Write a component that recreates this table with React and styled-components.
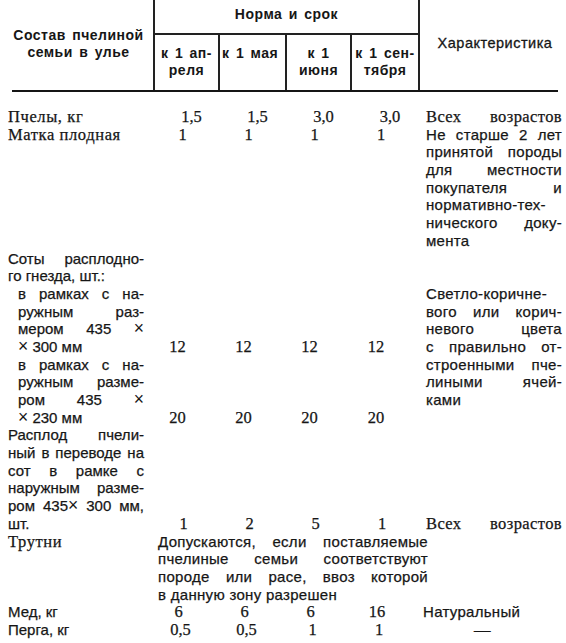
import React from "react";
import styled, { createGlobalStyle } from "styled-components";

const GlobalStyle = createGlobalStyle`
  html, body {
    margin: 0;
    padding: 0;
    background: #ffffff;
  }
  body {
    color: #161616;
    font-family: "Liberation Serif", "Times New Roman", serif;
  }
`;

const SERIF = `"Liberation Serif", "Times New Roman", serif`;
const SANS = `"Liberation Sans", Arial, sans-serif`;
const COLS = "155px 65px 67px 65px 68px 1fr";
const LINE = "17.7px";

const Page = styled.div`
  width: 566px;
  height: 643px;
  overflow: hidden;
`;

const Head = styled.div`
  display: grid;
  grid-template-columns: ${COLS};
  grid-template-rows: 35px 55px;
  font-family: ${SANS};
  font-weight: 700;
  font-size: 14px;
  letter-spacing: 0.5px;
  word-spacing: 2px;
  line-height: 17px;
`;

const HeadTitle = styled.div`
  grid-row: 1 / span 2;
  grid-column: 1;
  border-right: 2px solid #222;
  display: flex;
  align-items: center;
  justify-content: center;
  text-align: center;
  padding: 0 0 2px 4px;
`;

const HeadGroup = styled.div`
  grid-row: 1;
  grid-column: 2 / span 4;
  border-right: 2px solid #222;
  border-bottom: 2px solid #222;
  display: flex;
  align-items: center;
  justify-content: center;
  padding-bottom: 4px;
`;

const HeadSub = styled.div`
  grid-row: 2;
  border-right: 2px solid #222;
  padding: 10px 0 0 ${({ $left }) => ($left ? "2px" : "0")};
  text-align: ${({ $left }) => ($left ? "left" : "center")};
  white-space: nowrap;
`;

const HeadNote = styled.div`
  grid-row: 1 / span 2;
  grid-column: 6;
  display: flex;
  align-items: center;
  justify-content: center;
  font-weight: 400;
  font-size: 14.5px;
  -webkit-text-stroke: 0.3px #161616;
  padding: 0 0 4px 4px;
`;

const Rule = styled.div`
  height: 2px;
  margin: 0 8px 0 12px;
  background: #151515;
`;

const Body = styled.div`
  display: grid;
  grid-template-columns: ${COLS};
  padding-top: 16px;
  line-height: ${LINE};
  -webkit-text-stroke: 0.25px #161616;
`;

const Label = styled.div`
  grid-column: 1;
  grid-row: ${({ $row }) => $row};
  padding: 0 11px 0 ${({ $indent }) => ($indent ? "18px" : "8px")};
  font-family: ${({ $sans }) => ($sans ? SANS : SERIF)};
  font-size: ${({ $sans }) => ($sans ? "15px" : "16.5px")};
  letter-spacing: ${({ $sans }) => ($sans ? "0" : "0.6px")};
`;

const Num = styled.div`
  grid-row: ${({ $row }) => $row};
  align-self: ${({ $bottom }) => ($bottom ? "end" : "start")};
  text-align: center;
  font-family: ${SERIF};
  font-size: 16.5px;
  transform: translateX(${({ $shift }) => $shift}px);
`;

const Note = styled.div`
  grid-column: 6;
  grid-row: ${({ $row }) => $row} / span ${({ $span }) => $span || 1};
  align-self: ${({ $bottom }) => ($bottom ? "end" : "start")};
  padding: 0 4px 0 ${({ $pad }) => $pad || 6}px;
  font-family: ${({ $sans }) => ($sans ? SANS : SERIF)};
  font-size: ${({ $sans }) => ($sans ? "15px" : "16.5px")};
  letter-spacing: ${({ $sans }) => ($sans ? "0.3px" : "0.4px")};
`;

const Wide = styled.div`
  grid-column: 2 / span 4;
  grid-row: ${({ $row }) => $row};
  margin-right: -8px;
  padding-left: 3px;
  font-family: ${SANS};
  font-size: 15px;
  letter-spacing: 0.3px;
`;

const Line = styled.div`
  height: ${LINE};
  white-space: nowrap;
  text-align: ${({ $just }) => ($just ? "justify" : "left")};
  text-align-last: ${({ $just }) => ($just ? "justify" : "left")};
`;

const Cross = styled.span`
  font-family: ${SANS};
  font-size: 17.5px;
  line-height: 1;
  -webkit-text-stroke: 0;
`;

// split a line on "×" so the multiplication sign can be drawn larger
const withCross = (text) =>
  text.split("×").map((part, i, arr) => (
    <React.Fragment key={i}>
      {part}
      {i < arr.length - 1 && <Cross>×</Cross>}
    </React.Fragment>
  ));

const Lines = ({ lines, all }) =>
  lines.map((l, i) => (
    <Line key={i} $just={all || i < lines.length - 1}>
      {withCross(l)}
    </Line>
  ));

const rows = [
  { row: 1, label: ["Пчелы, кг"], nums: ["1,5", "1,5", "3,0", "3,0"], shift: 4 },
  { row: 2, label: ["Матка плодная"], nums: ["1", "1", "1", "1"], shift: -5 },
  { row: 3, label: ["Соты расплодно-", "го гнезда, шт.:"], sans: true },
  {
    row: 4,
    label: ["в рамках с на-", "ружным раз-", "мером 435 ×", "× 300 мм"],
    sans: true,
    indent: true,
    nums: ["12", "12", "12", "12"],
    shift: -10,
    bottom: true,
  },
  {
    row: 5,
    label: ["в рамках с на-", "ружным разме-", "ром 435 ×", "× 230 мм"],
    sans: true,
    indent: true,
    nums: ["20", "20", "20", "20"],
    shift: -10,
    bottom: true,
  },
  {
    row: 6,
    label: [
      "Расплод пчели-",
      "ный в переводе на",
      "сот в рамке с",
      "наружным разме-",
      "ром 435× 300 мм,",
      "шт.",
    ],
    sans: true,
    nums: ["1", "2", "5", "1"],
    shift: -4,
    bottom: true,
  },
  { row: 7, label: ["Трутни"] },
  { row: 8, label: ["Мед, кг"], sans: true, nums: ["6", "6", "6", "16"], shift: -9 },
  { row: 9, label: ["Перга, кг"], sans: true, nums: ["0,5", "0,5", "1", "1"], shift: -7 },
];

export default function App() {
  return (
    <Page>
      <GlobalStyle />
      <Head>
        <HeadTitle>
          Состав пчелиной
          <br />
          семьи в улье
        </HeadTitle>
        <HeadGroup>Норма и срок</HeadGroup>
        <HeadSub>
          к 1 ап-
          <br />
          реля
        </HeadSub>
        <HeadSub $left>к 1 мая</HeadSub>
        <HeadSub>
          к 1
          <br />
          июня
        </HeadSub>
        <HeadSub>
          к 1 сен-
          <br />
          тября
        </HeadSub>
        <HeadNote>Характеристика</HeadNote>
      </Head>
      <Rule />
      <Body>
        {rows.map((r) => (
          <React.Fragment key={r.row}>
            <Label $row={r.row} $sans={r.sans} $indent={r.indent}>
              <Lines lines={r.label} />
            </Label>
            {r.nums &&
              r.nums.map((n, i) => (
                <Num key={i} $row={r.row} $shift={r.shift} $bottom={r.bottom}>
                  {n}
                </Num>
              ))}
          </React.Fragment>
        ))}

        <Note $row={1}>
          <Lines lines={["Всех возрастов"]} all />
        </Note>
        <Note $row={2} $sans>
          <Lines
            lines={[
              "Не старше 2 лет",
              "принятой породы",
              "для местности",
              "покупателя и",
              "нормативно-тех-",
              "нического доку-",
              "мента",
            ]}
          />
        </Note>
        <Note $row={4} $span={2} $sans>
          <Lines
            lines={[
              "Светло-коричне-",
              "вого или корич-",
              "невого цвета",
              "с правильно от-",
              "строенными пче-",
              "лиными ячей-",
              "ками",
            ]}
          />
        </Note>
        <Note $row={6} $bottom>
          <Lines lines={["Всех возрастов"]} all />
        </Note>
        <Wide $row={7}>
          <Lines
            lines={[
              "Допускаются, если поставляемые",
              "пчелиные семьи соответствуют",
              "породе или расе, ввоз которой",
              "в данную зону разрешен",
            ]}
          />
        </Wide>
        <Note $row={8} $sans $pad={3}>
          Натуральный
        </Note>
        <Note $row={9} $pad={54}>
          —
        </Note>
      </Body>
    </Page>
  );
}
